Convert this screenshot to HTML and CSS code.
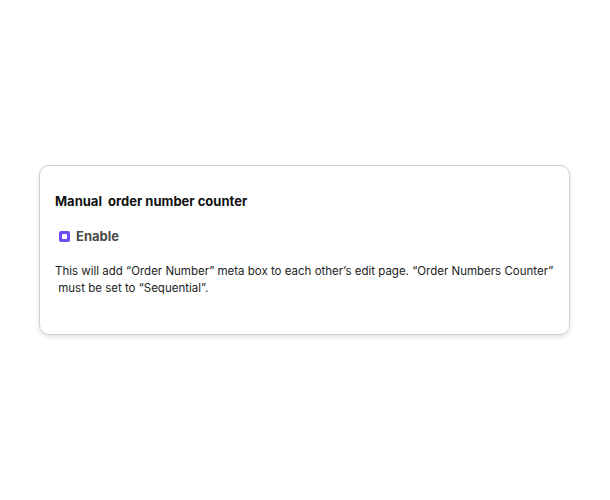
FILE: index.html
```html
<!DOCTYPE html>
<html>
<head>
<meta charset="utf-8">
<link rel="stylesheet" href="styles.css">
</head>
<body>
<div class="page">
  <div class="card">
    <h2 class="title">Manual&nbsp; order number counter</h2>
    <label class="option">
      <span class="check"><span class="check-dot"></span></span>
      <span class="option-label">Enable</span>
    </label>
    <p class="desc">This will add “Order Number” meta box to each other’s edit page. “Order Numbers Counter”<br>&nbsp;must be set to “Sequential”.</p>
  </div>
</div>
</body>
</html>
```
FILE: styles.css
```css
html, body {
  margin: 0;
  padding: 0;
  background: #ffffff;
}
body {
  font-family: Inter, "Noto Sans", sans-serif;
  color: #111;
}
.page {
  height: 500px;
  display: flex;
  align-items: center;
  padding: 0 40px 0 39px;
}
.card {
  flex: 1;
  box-sizing: border-box;
  height: 170px;
  border: 1px solid #cfcfcf;
  border-radius: 10px;
  box-shadow: 0 2px 5px rgba(0,0,0,0.12);
  padding: 27px 15px 0 15px;
}
.title {
  margin: 0;
  font-size: 13px;
  font-weight: 700;
  line-height: 17px;
  color: #111;
}
.option {
  display: flex;
  align-items: center;
  gap: 6px;
  margin-top: 18px;
  padding-left: 4px;
}
.check {
  width: 11px;
  height: 11px;
  box-sizing: border-box;
  background: #6d4cf6;
  border-radius: 2px;
  display: flex;
  align-items: center;
  justify-content: center;
}
.check-dot {
  width: 5px;
  height: 5px;
  background: #fff;
  border-radius: 1px;
}
.option-label {
  font-size: 13px;
  font-weight: 700;
  color: #4a4a4a;
  line-height: 17px;
}
.desc {
  margin: 18px 0 0 0;
  font-size: 11.5px;
  line-height: 17px;
  color: #222;
}
```
